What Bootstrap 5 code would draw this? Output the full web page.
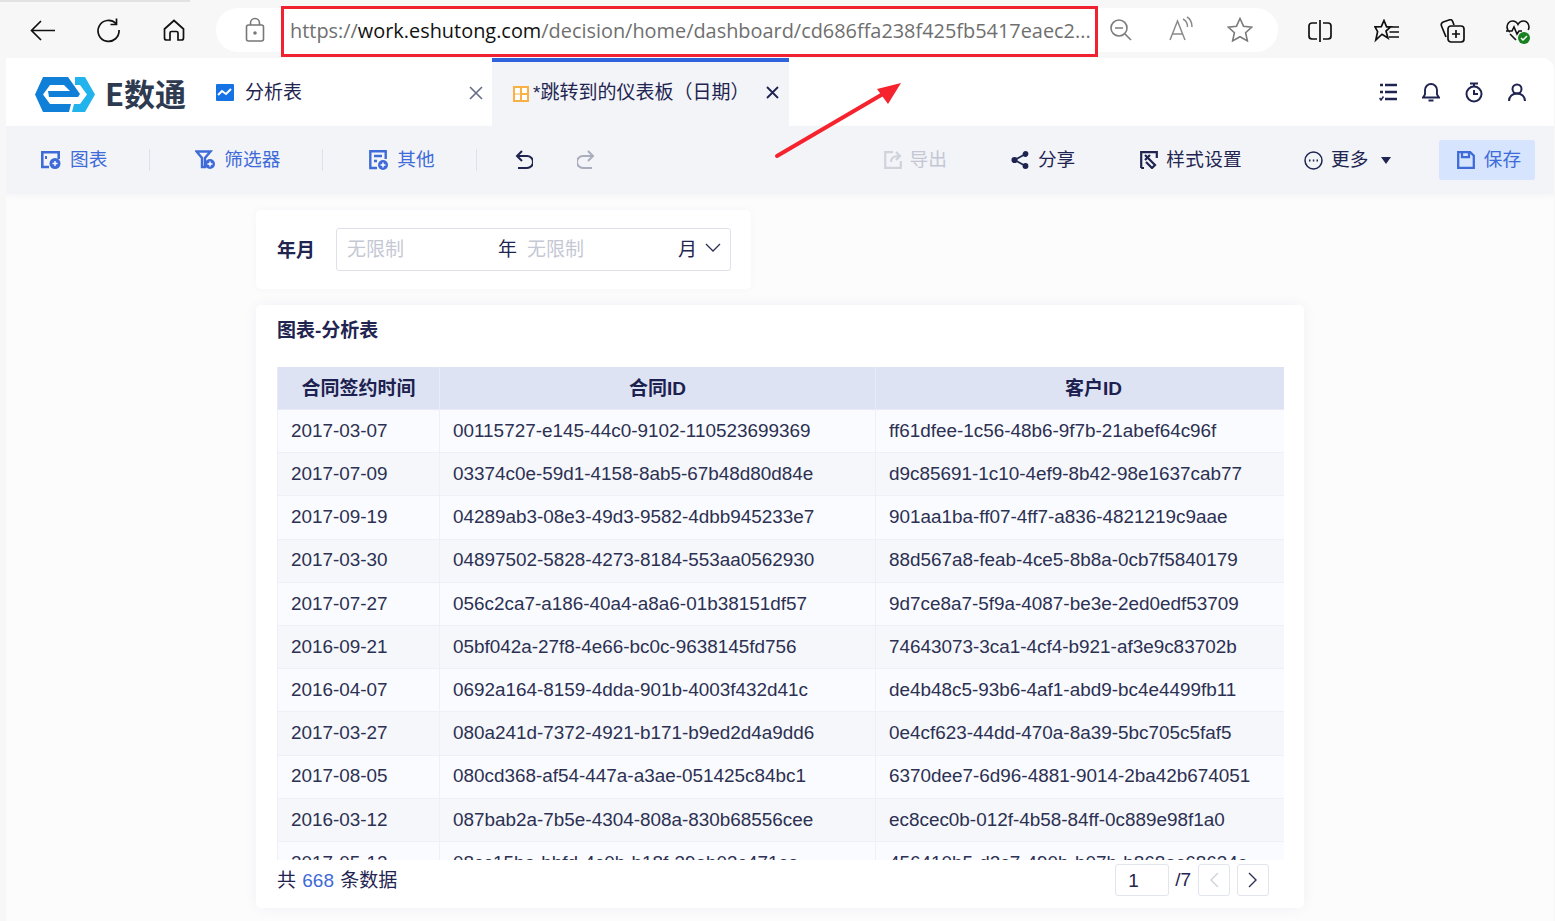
<!DOCTYPE html>
<html lang="zh">
<head>
<meta charset="utf-8">
<title>E数通</title>
<link rel="stylesheet" href="https://cdn.jsdelivr.net/npm/bootstrap@5.3.0/dist/css/bootstrap.min.css">
<style>
html,body{height:921px;overflow:hidden}
body{background:#f7f7f7;font-family:"Liberation Sans","Noto Sans CJK SC",sans-serif;color:#1f2450;position:relative;font-size:19px}
.topline{height:2px;width:190px;background:#e2e2e2}
.chrome{height:56px;padding-left:29px}
.chrome svg{flex:none;display:block}
.urlpill{margin-left:30px;width:1062px;height:44px;border-radius:22px;background:#fff;margin-top:6px}
.urlbox{width:817px;height:51px;border:3px solid #f0222f;margin-left:16px;margin-top:-2px;padding-left:6px;font:19.9px/44px "Open Sans","Noto Sans",sans-serif;color:#6f6f6f;white-space:nowrap;overflow:hidden;background:#fff}
.urlbox b{font-weight:400;color:#111}
.app{margin-left:6px;width:1548px;height:863px;background:#fcfcfd;border-top-right-radius:12px;overflow:hidden}
.headbar{height:68px;background:#fff}
.brandtext{font:700 31px/1 "Noto Sans CJK SC",sans-serif;color:#2d3a4f;margin-left:10px}
.tabone{width:287px;height:68px;padding-left:11px;color:#1f2450;margin-left:19px}
.tabone span:first-of-type{padding-top:2px}
.tabtwo{width:297px;height:68px;background:#f2f4f8;border-top:4px solid #2f63da;padding-left:21px;padding-bottom:1px}
.tabx{margin-left:auto;color:#6d7390}
.tabtwo .tabx{margin-top:-4px}
.headtools{margin-left:auto;padding-right:28px;gap:25px}
.toolbar{height:68px;background:#f2f4f8;box-shadow:0 2px 6px rgba(30,40,80,.04);padding-left:35px;font-size:18.67px}
.tbitem{gap:9px;white-space:nowrap}
.tbblue{color:#3e6bd8}
.tbsep{width:1px;height:22px;background:#dfe2ec}
.tbmuted{color:#c4c7d3}
.savebtn{width:96px;height:40px;background:#d6e4fd;border-radius:3px;color:#3e6bd8;gap:9px;margin-left:auto;margin-right:19px;padding-left:4px}
.mainarea{padding:16px 0 0 250px}
.filtercard{width:495px;height:79px;background:#fff;border-radius:5px;box-shadow:0 0 10px rgba(30,40,80,.03);padding:18px 20px 0 21px}
.filterlabel{font-weight:700;width:59px;line-height:45px}
.datebox{width:395px;height:43px;border:1px solid #dfe1ea;border-radius:3px;padding:0 9px 0 10px;line-height:42px}
.ph{color:#c5c8d4}
.tablecard{width:1048px;height:603px;margin-top:16px;background:#fff;border-radius:5px;box-shadow:0 0 14px rgba(30,40,80,.05);padding:0 20px 0 21px}
.cardtitle{height:62px;font-weight:700;line-height:51px}
.tablewrap{height:493px;overflow:hidden}
.datatable{width:1007px;table-layout:fixed;margin:0;border-collapse:collapse}
.datatable th{background:#dde3f3;height:42.5px;text-align:center;padding:2px 0 0;font-weight:700;color:#1c2150;border:1px solid #e8ebf5;border-top:0;vertical-align:middle}
.datatable th:last-child{padding-left:27px}
.datatable td{height:43.2px;padding:0 0 0 13px;background:#fafbfe;color:#2c3052;border:1px solid #edf0f7;border-top:0;vertical-align:middle;white-space:nowrap;overflow:hidden;font-size:18.9px}
.datatable tbody tr:nth-child(even) td{background:#f5f7fb}
.tablefoot{height:42px}
.tablecount{word-spacing:1px;padding-top:1px}
.tablefoot em{font-style:normal;color:#3e6bd8}
.pagebox{height:32px;border:1px solid #e2e5ee;border-radius:3px;background:#fff}
.pageinput{width:54px;padding-left:12px;line-height:32px}
.pagebtn{width:32px}
.pagerrow{padding-right:15px;margin-bottom:2px}
.arrowover{position:absolute;left:770px;top:78px}
</style>
</head>
<body>
<div class="topline"></div>
<div class="chrome d-flex">
  <div class="d-flex align-items-center">
    <svg width="26" height="24" viewBox="0 0 26 24" fill="none" stroke="#111" stroke-width="1.700"><path d="M2 12.500H26M12 3l-9.500 9.500L12 22"/></svg>
    <svg width="26" height="26" viewBox="0 0 26 26" fill="none" stroke="#111" stroke-width="1.700" style="margin-left:40px"><path d="M21 6.500A10.500 10.500 0 1 0 24 13M21.500 1.500v6h-6"/></svg>
    <svg width="24" height="24" viewBox="0 0 24 24" fill="none" stroke="#111" stroke-width="1.700" style="margin-left:41px"><path d="M2.500 11 12 2.500 21.500 11v9a2 2 0 0 1-2 2H16v-7a1.500 1.500 0 0 0-1.500-1.500h-5A1.500 1.500 0 0 0 8 15v7H4.500a2 2 0 0 1-2-2z"/></svg>
  </div>
  <div class="urlpill d-flex align-items-start">
    <svg width="20" height="26" viewBox="0 0 20 26" fill="none" stroke="#777" stroke-width="1.600" style="margin:9px 0 0 29px"><rect x="1.500" y="8" width="17" height="16" rx="2"/><path d="M5.500 8V6a4.500 4.500 0 0 1 9 0v2"/><circle cx="10" cy="16" r="1" fill="#777"/></svg>
    <div class="urlbox">https://<b>work.eshutong.com</b>/decision/home/dashboard/cd686ffa238f425fb5417eaec2...</div>
    <svg width="24" height="24" viewBox="0 0 24 24" fill="none" stroke="#7b7b7b" stroke-width="1.600" style="margin:10px 0 0 11px"><circle cx="10" cy="10" r="8"/><path d="M6 10h8M16 16l6 6"/></svg>
    <svg width="26" height="26" viewBox="0 0 26 26" fill="none" stroke="#8a8a8a" stroke-width="1.500" style="margin:8px 0 0 35px"><path d="M2 24 9.500 5 17 24M4.500 18h10M15 3c3 1.500 4.500 4.500 4.500 8M19 1c3.500 2 5 6 5 10"/></svg>
    <svg width="26" height="25" viewBox="0 0 26 25" fill="none" stroke="#7b7b7b" stroke-width="1.600" style="margin:9px 0 0 33px"><path d="M13 1.500l3.500 7.700 8.300.9-6.200 5.600 1.800 8.200L13 19.700l-7.400 4.200 1.800-8.200L1.200 10.100l8.300-.9z"/></svg>
  </div>
  <svg width="24" height="22" viewBox="0 0 24 22" fill="none" stroke="#111" stroke-width="1.700" style="margin:18px 0 0 30px"><path d="M12 0v22M9 3H4a3 3 0 0 0-3 3v10a3 3 0 0 0 3 3h5M15 3h5a3 3 0 0 1 3 3v10a3 3 0 0 1-3 3h-5"/></svg>
  <svg width="26" height="24" viewBox="0 0 26 24" fill="none" stroke="#111" stroke-width="1.700" style="margin:17px 0 0 42px"><path d="M10 1.500l2.600 6.300h4L12 12l2 7-6-3.800L1.800 21l1.800-8.300L1 7.800l6.300-.2zM17 8h8M15.500 13H25M15 18h10"/></svg>
  <svg width="25" height="24" viewBox="0 0 25 24" fill="none" stroke="#111" stroke-width="1.700" style="margin:17px 0 0 40px"><rect x="8" y="7" width="16" height="16" rx="3"/><path d="M16 11v8M12 15h8M6 18 1.500 7a3 3 0 0 1 1.700-4L9 1a3 3 0 0 1 3.800 1.700L14 6"/></svg>
  <svg width="26" height="26" viewBox="0 0 26 26" style="margin:17px 0 0 40px"><path d="M5 13a6 6 0 0 1-3-5c0-3.500 2.500-6 5.500-6 2.500 0 4.500 1.500 5.500 3.500C14 3.500 16 2 18.500 2c3 0 5.500 2.500 5.500 6 0 1-.3 2-.8 3M1 12h6l2-4 3 7 2-3h3M5 15l6 6" fill="none" stroke="#111" stroke-width="1.600"/><circle cx="19" cy="19" r="6" fill="#17801f"/><path d="M16 19l2 2 4-4" fill="none" stroke="#fff" stroke-width="1.500"/></svg>
</div>
<div class="app">
  <div class="headbar d-flex align-items-center">
    <svg width="60" height="35" viewBox="0 0 60 35" style="margin-left:29px;margin-top:4px;flex:none"><path d="M8 0H33L45 17 43 20H14L13 14H35L29 8H15L8 17.500 15 27H36L34 35H8L0 17.500Z" fill="#0f7fd8"/><path d="M40 0H50L60 17.500 50 35H37L39 27H45L52 17.500 45 8H40Z" fill="#22b2ec"/></svg>
    <span class="brandtext">E数通</span>
    <div class="tabone d-flex align-items-center">
      <svg width="18" height="17" viewBox="0 0 18 17" style="flex:none"><rect width="18" height="17" rx="1" fill="#1673e6"/><path d="M2 11l4-4 4 3 5-5" fill="none" stroke="#fff" stroke-width="2"/></svg>
      <span style="margin-left:11px">分析表</span>
      <span class="tabx" style="margin-right:9px"><svg width="14" height="14" viewBox="0 0 14 14" stroke="#666c88" stroke-width="1.600"><path d="M1 1l12 12M13 1 1 13"/></svg></span>
    </div>
    <div class="tabtwo d-flex align-items-center">
      <svg width="16" height="16" viewBox="0 0 16 16" style="flex:none"><rect width="16" height="16" fill="#f9b044"/><path d="M2 2h5v12H2zM9 2h5v5H9zM9 9h5v5H9z" fill="#fff"/><path d="M2 8h5" stroke="#f9b044"/></svg>
      <span style="margin-left:4px;white-space:nowrap">*跳转到的仪表板（日期）</span>
      <span class="tabx" style="margin-right:10px"><svg width="13" height="13" viewBox="0 0 13 13" stroke="#1f2450" stroke-width="1.800"><path d="M1 1l11 11M12 1 1 12"/></svg></span>
    </div>
    <div class="headtools d-flex align-items-center">
      <svg width="18" height="18" viewBox="0 0 18 18" fill="none" stroke="#1f2450" stroke-width="2.400"><path d="M6 2h12M6 9h12M6 16h12M1 2h3M1 9h3" /><path d="M0.500 15l1.500 2 2.500-3.500" stroke-width="1.500"/></svg>
      <svg width="18" height="20" viewBox="0 0 18 20" fill="none" stroke="#1f2450" stroke-width="1.900"><path d="M1 15.500h16l-2-3V8A6 6 0 0 0 3 8v4.500zM6.500 18.500h5"/></svg>
      <svg width="18" height="21" viewBox="0 0 18 21" fill="none" stroke="#1f2450" stroke-width="2"><circle cx="9" cy="12" r="7.500"/><path d="M5 1.500h8M9 1.500v3M9 8v4h4"/></svg>
      <svg width="18" height="19" viewBox="0 0 18 19" fill="none" stroke="#1f2450" stroke-width="2"><circle cx="9" cy="6" r="4.500"/><path d="M1 18c0-4.500 3.500-7.500 8-7.500s8 3 8 7.500"/></svg>
    </div>
  </div>
  <div class="toolbar d-flex align-items-center">
    <div class="tbitem tbblue d-flex align-items-center">
      <svg width="20" height="18" viewBox="0 0 20 18" fill="none" stroke="#3e6bd8" stroke-width="2.600"><path d="M8 16H1.300V1.300h16.400V8"/><path d="M5 5v3" stroke-width="2"/><circle cx="14" cy="12.500" r="5.500" fill="#3e6bd8" stroke="none"/><path d="M11.500 12.500h5M14 10v5" stroke="#fff" stroke-width="1.400"/></svg><span>图表</span>
    </div>
    <div class="tbsep" style="margin-left:42px"></div>
    <div class="tbitem tbblue d-flex align-items-center" style="margin-left:45px">
      <svg width="20" height="20" viewBox="0 0 20 20" fill="none" stroke="#3e6bd8" stroke-width="2.400"><path d="M1.500 1.500h14L10 8v9H7V8z"/><circle cx="15" cy="14" r="5" fill="#3e6bd8" stroke="none"/><path d="M12.500 14h5M15 11.500v5" stroke="#fff" stroke-width="1.400"/></svg><span>筛选器</span>
    </div>
    <div class="tbsep" style="margin-left:42px"></div>
    <div class="tbitem tbblue d-flex align-items-center" style="margin-left:46px">
      <svg width="19" height="20" viewBox="0 0 19 20" fill="none" stroke="#3e6bd8" stroke-width="2.400"><path d="M8 18H1.300V1.300h15.400V9M5 6h8M5 11h3"/><circle cx="14" cy="15" r="5" fill="#3e6bd8" stroke="none"/><path d="M11.500 15h5M14 12.500v5" stroke="#fff" stroke-width="1.400"/></svg><span>其他</span>
    </div>
    <div class="tbsep" style="margin-left:41px"></div>
    <svg width="18" height="20" viewBox="0 0 18 20" fill="none" stroke="#1f2450" stroke-width="2" style="margin-left:38px"><path d="M7 1 2 6l5 5M2 6h10a5 5 0 0 1 0 12H3"/></svg>
    <svg width="18" height="20" viewBox="0 0 18 20" fill="none" stroke="#a9adbd" stroke-width="2" style="margin-left:44px"><path d="M11 1l5 5-5 5M16 6H6a5 5 0 0 0 0 12h9"/></svg>
    <div class="tbitem tbmuted d-flex align-items-center" style="margin-left:289px;gap:8px">
      <svg width="18" height="18" viewBox="0 0 18 18" fill="none" stroke="#d0d2dc" stroke-width="2.200"><path d="M9 1.200H1.200v15.600h15.600V10M7 11c0-4 3-6 8-6M12 1l4 4-4 4"/></svg><span>导出</span>
    </div>
    <div class="tbitem d-flex align-items-center" style="margin-left:64px">
      <svg width="18" height="18" viewBox="0 0 18 18" fill="#1f2450" stroke="#1f2450" stroke-width="1.800"><circle cx="3.500" cy="9" r="2.200"/><circle cx="14.500" cy="3" r="2"/><circle cx="14.500" cy="15" r="2"/><path d="M3.500 9l11-6M3.500 9l11 6"/></svg><span>分享</span>
    </div>
    <div class="tbitem d-flex align-items-center" style="margin-left:65px;gap:8px">
      <svg width="18" height="18" viewBox="0 0 18 18" fill="none" stroke="#1f2450" stroke-width="2.200"><path d="M1.200 17V1.200h15.600V7M1.200 17H4M5 4l10 10-3 3L6 11M10 4 5 9"/></svg><span style="letter-spacing:.3px">样式设置</span>
    </div>
    <div class="tbitem d-flex align-items-center" style="margin-left:62px;gap:8px">
      <svg width="19" height="19" viewBox="0 0 19 19" fill="none" stroke="#1f2450" stroke-width="1.500"><circle cx="9.500" cy="9.500" r="8.500"/><path d="M5 9.500h1.500M8.800 9.500h1.500M12.500 9.500H14" stroke-width="1.800"/></svg><span>更多</span>
      <svg width="10" height="7" viewBox="0 0 10 7" style="margin-left:5px"><path d="M0 0h10L5 7z" fill="#1f2450"/></svg>
    </div>
    <div class="savebtn d-flex align-items-center justify-content-center">
      <svg width="18" height="18" viewBox="0 0 18 18" fill="none" stroke="#3e6bd8" stroke-width="2.300"><path d="M1.200 1.200h12l3.600 3.600v12H1.200zM5 1.200v5h7v-5"/></svg><span>保存</span>
    </div>
  </div>
  <div class="mainarea">
    <div class="filtercard d-flex">
      <div class="filterlabel">年月</div>
      <div class="datebox d-flex">
        <span class="ph">无限制</span>
        <span style="margin-left:94px">年</span>
        <span class="ph" style="margin-left:10px">无限制</span>
        <span style="margin-left:94px">月</span>
        <svg class="ms-auto" width="16" height="9" viewBox="0 0 16 9" fill="none" stroke="#2c3052" stroke-width="1.300" style="margin-top:14px"><path d="M1 1l7 7 7-7"/></svg>
      </div>
    </div>
    <div class="tablecard">
      <div class="cardtitle">图表-分析表</div>
      <div class="tablewrap">
        <table class="datatable">
          <colgroup><col style="width:162px"><col style="width:436px"><col style="width:409px"></colgroup>
          <thead><tr><th>合同签约时间</th><th>合同ID</th><th>客户ID</th></tr></thead>
          <tbody>
            <tr><td>2017-03-07</td><td>00115727-e145-44c0-9102-110523699369</td><td>ff61dfee-1c56-48b6-9f7b-21abef64c96f</td></tr>
            <tr><td>2017-07-09</td><td>03374c0e-59d1-4158-8ab5-67b48d80d84e</td><td>d9c85691-1c10-4ef9-8b42-98e1637cab77</td></tr>
            <tr><td>2017-09-19</td><td>04289ab3-08e3-49d3-9582-4dbb945233e7</td><td>901aa1ba-ff07-4ff7-a836-4821219c9aae</td></tr>
            <tr><td>2017-03-30</td><td>04897502-5828-4273-8184-553aa0562930</td><td>88d567a8-feab-4ce5-8b8a-0cb7f5840179</td></tr>
            <tr><td>2017-07-27</td><td>056c2ca7-a186-40a4-a8a6-01b38151df57</td><td>9d7ce8a7-5f9a-4087-be3e-2ed0edf53709</td></tr>
            <tr><td>2016-09-21</td><td>05bf042a-27f8-4e66-bc0c-9638145fd756</td><td>74643073-3ca1-4cf4-b921-af3e9c83702b</td></tr>
            <tr><td>2016-04-07</td><td>0692a164-8159-4dda-901b-4003f432d41c</td><td>de4b48c5-93b6-4af1-abd9-bc4e4499fb11</td></tr>
            <tr><td>2017-03-27</td><td>080a241d-7372-4921-b171-b9ed2d4a9dd6</td><td>0e4cf623-44dd-470a-8a39-5bc705c5faf5</td></tr>
            <tr><td>2017-08-05</td><td>080cd368-af54-447a-a3ae-051425c84bc1</td><td>6370dee7-6d96-4881-9014-2ba42b674051</td></tr>
            <tr><td>2016-03-12</td><td>087bab2a-7b5e-4304-808a-830b68556cee</td><td>ec8cec0b-012f-4b58-84ff-0c889e98f1a0</td></tr>
            <tr><td>2017-05-12</td><td>08cc15ba-bbfd-4c0b-b18f-39ab03c471ca</td><td>456410b5-d2c7-490b-b07b-b868ac68634c</td></tr>
          </tbody>
        </table>
      </div>
      <div class="tablefoot d-flex align-items-center">
        <span class="tablecount">共 <em>668</em> 条数据</span>
        <div class="pagerrow d-flex align-items-center ms-auto">
          <div class="pagebox pageinput">1</div>
          <span style="margin:0 7px 0 6px">/7</span>
          <div class="pagebox pagebtn d-flex align-items-center justify-content-center"><svg width="10" height="16" viewBox="0 0 10 16" fill="none" stroke="#cfd2dc" stroke-width="1.400"><path d="M9 1 2 8l7 7"/></svg></div>
          <div class="pagebox pagebtn d-flex align-items-center justify-content-center" style="margin-left:7px"><svg width="10" height="16" viewBox="0 0 10 16" fill="none" stroke="#2c3052" stroke-width="1.400"><path d="M1 1l7 7-7 7"/></svg></div>
        </div>
      </div>
    </div>
  </div>
</div>
<svg class="arrowover" width="135" height="85" viewBox="0 0 135 85"><path d="M7 78 118 13" stroke="#f5232e" stroke-width="4" stroke-linecap="round"/><path d="M131 5 118 26 107 11z" fill="#f5232e"/></svg>
</body>
</html>
